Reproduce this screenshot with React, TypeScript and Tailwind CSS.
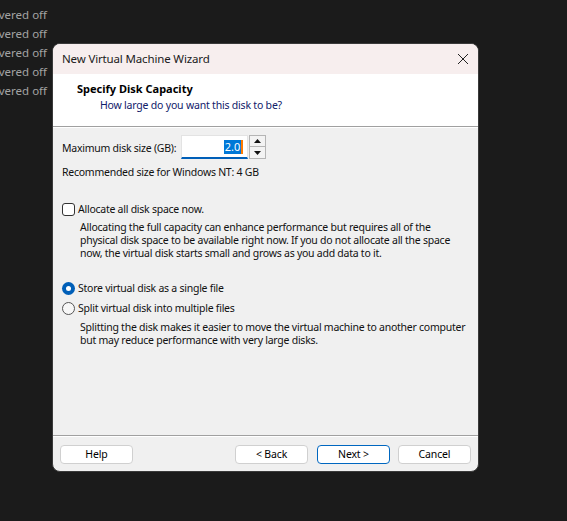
import React from "react";

const font = { fontFamily: '"Noto Sans", "Segoe UI", sans-serif' };

function Btn({ label, primary }: { label: string; primary?: boolean }) {
  return (
    <div
      className={
        "w-[73px] h-[19px] rounded-[4px] bg-white flex items-center justify-center text-[10.5px] tracking-[-0.15px] text-black border " +
        (primary ? "border-[#0067c0]" : "border-[#d0d0d0]")
      }
    >
      {label}
    </div>
  );
}

export default function App() {
  const rows = ["vered off", "vered off", "vered off", "vered off", "vered off"];
  return (
    <div className="w-[567px] h-[521px] bg-[#1b1b1b] flex overflow-hidden" style={font}>
      <div className="w-[47px] flex flex-col pt-[5px]">
        {rows.map((r, i) => (
          <div key={i} className="h-[19px] flex justify-end whitespace-nowrap text-[11.5px] leading-[19px] text-[#a3a3a3]">
            {r}
          </div>
        ))}
      </div>
      <div className="ml-[5px] mt-[43px] w-[427px] h-[429px] rounded-[8px] bg-[#f0f0f0] overflow-hidden flex flex-col border border-[#3a3a3a]">
        <div className="h-[30px] bg-[#f7eeee] flex items-center justify-between pl-[9px] pr-[9px] shrink-0">
          <span className="text-[11.5px] tracking-[-0.15px] text-[#1a1a1a]">New Virtual Machine Wizard</span>
          <svg width="12" height="12" viewBox="0 0 12 12">
            <path d="M1 1 L11 11 M11 1 L1 11" stroke="#222" strokeWidth="1" />
          </svg>
        </div>
        <div className="h-[52px] bg-white shrink-0 flex flex-col pl-[24px] pt-[8px]">
          <div className="text-[11px] font-bold leading-[14px] text-black">Specify Disk Capacity</div>
          <div className="text-[10.5px] tracking-[-0.2px] leading-[14px] mt-[2px] pl-[23px] text-[#10206a]">How large do you want this disk to be?</div>
        </div>
        <div className="h-px bg-[#a0a0a0] shrink-0" />
        <div className="h-px bg-white shrink-0" />
        <div className="flex-1 flex flex-col pl-[9px] text-[10.5px] tracking-[-0.25px] text-[#111] leading-[13px]">
          <div className="mt-[7px] h-[24px] flex items-center">
            <span className="mt-[3px]">Maximum disk size (GB):</span>
            <div className="ml-[5px] w-[67px] h-[24px] bg-white border border-[#e3e3e3] border-b-2 border-b-[#005fb8] flex items-center justify-end pr-[4px]">
              <span className="bg-[#0078d7] text-white px-[1px] leading-[14px] text-[11px] tracking-normal">2.0</span>
              <span className="w-[2px] h-[14px] bg-[#ff7a00]" />
            </div>
            <div className="ml-px w-[17px] h-[24px] flex flex-col">
              <div className="h-[12px] border border-[#b5b5b5] bg-[#f3f3f3] flex items-center justify-center">
                <svg width="7" height="4" viewBox="0 0 7 4"><path d="M0 4 L3.5 0 L7 4 Z" fill="#111" /></svg>
              </div>
              <div className="h-[12px] border border-t-0 border-[#b5b5b5] bg-[#f3f3f3] flex items-center justify-center">
                <svg width="7" height="4" viewBox="0 0 7 4"><path d="M0 0 L3.5 4 L7 0 Z" fill="#111" /></svg>
              </div>
            </div>
          </div>
          <div className="mt-[7px]">Recommended size for Windows NT: 4 GB</div>
          <div className="mt-[23px] h-[14px] flex items-center">
            <div className="w-[13px] h-[13px] rounded-[3px] border border-[#333] bg-white" />
            <span className="ml-[3px]">Allocate all disk space now.</span>
          </div>
          <div className="mt-[5px] pl-[18px] whitespace-nowrap">
            Allocating the full capacity can enhance performance but requires all of the
            <br />
            physical disk space to be available right now. If you do not allocate all the space
            <br />
            now, the virtual disk starts small and grows as you add data to it.
          </div>
          <div className="mt-[21px] h-[14px] flex items-center">
            <div className="w-[13px] h-[13px] rounded-full bg-[#005fb8] flex items-center justify-center">
              <div className="w-[5px] h-[5px] rounded-full bg-white" />
            </div>
            <span className="ml-[3px]">Store virtual disk as a single file</span>
          </div>
          <div className="mt-[6px] h-[14px] flex items-center">
            <div className="w-[13px] h-[13px] rounded-full border border-[#555] bg-[#f7f7f7]" />
            <span className="ml-[3px]">Split virtual disk into multiple files</span>
          </div>
          <div className="mt-[6px] pl-[18px] whitespace-nowrap">
            Splitting the disk makes it easier to move the virtual machine to another computer
            <br />
            but may reduce performance with very large disks.
          </div>
        </div>
        <div className="h-px bg-[#a0a0a0] shrink-0" />
        <div className="h-px bg-white shrink-0" />
        <div className="h-[34px] shrink-0 flex items-start pt-[8px] pl-[7px] pr-[7px]">
          <Btn label="Help" />
          <div className="flex-1" />
          <Btn label="< Back" />
          <div className="w-[9px]" />
          <Btn label="Next >" primary />
          <div className="w-[8px]" />
          <Btn label="Cancel" />
        </div>
      </div>
    </div>
  );
}
